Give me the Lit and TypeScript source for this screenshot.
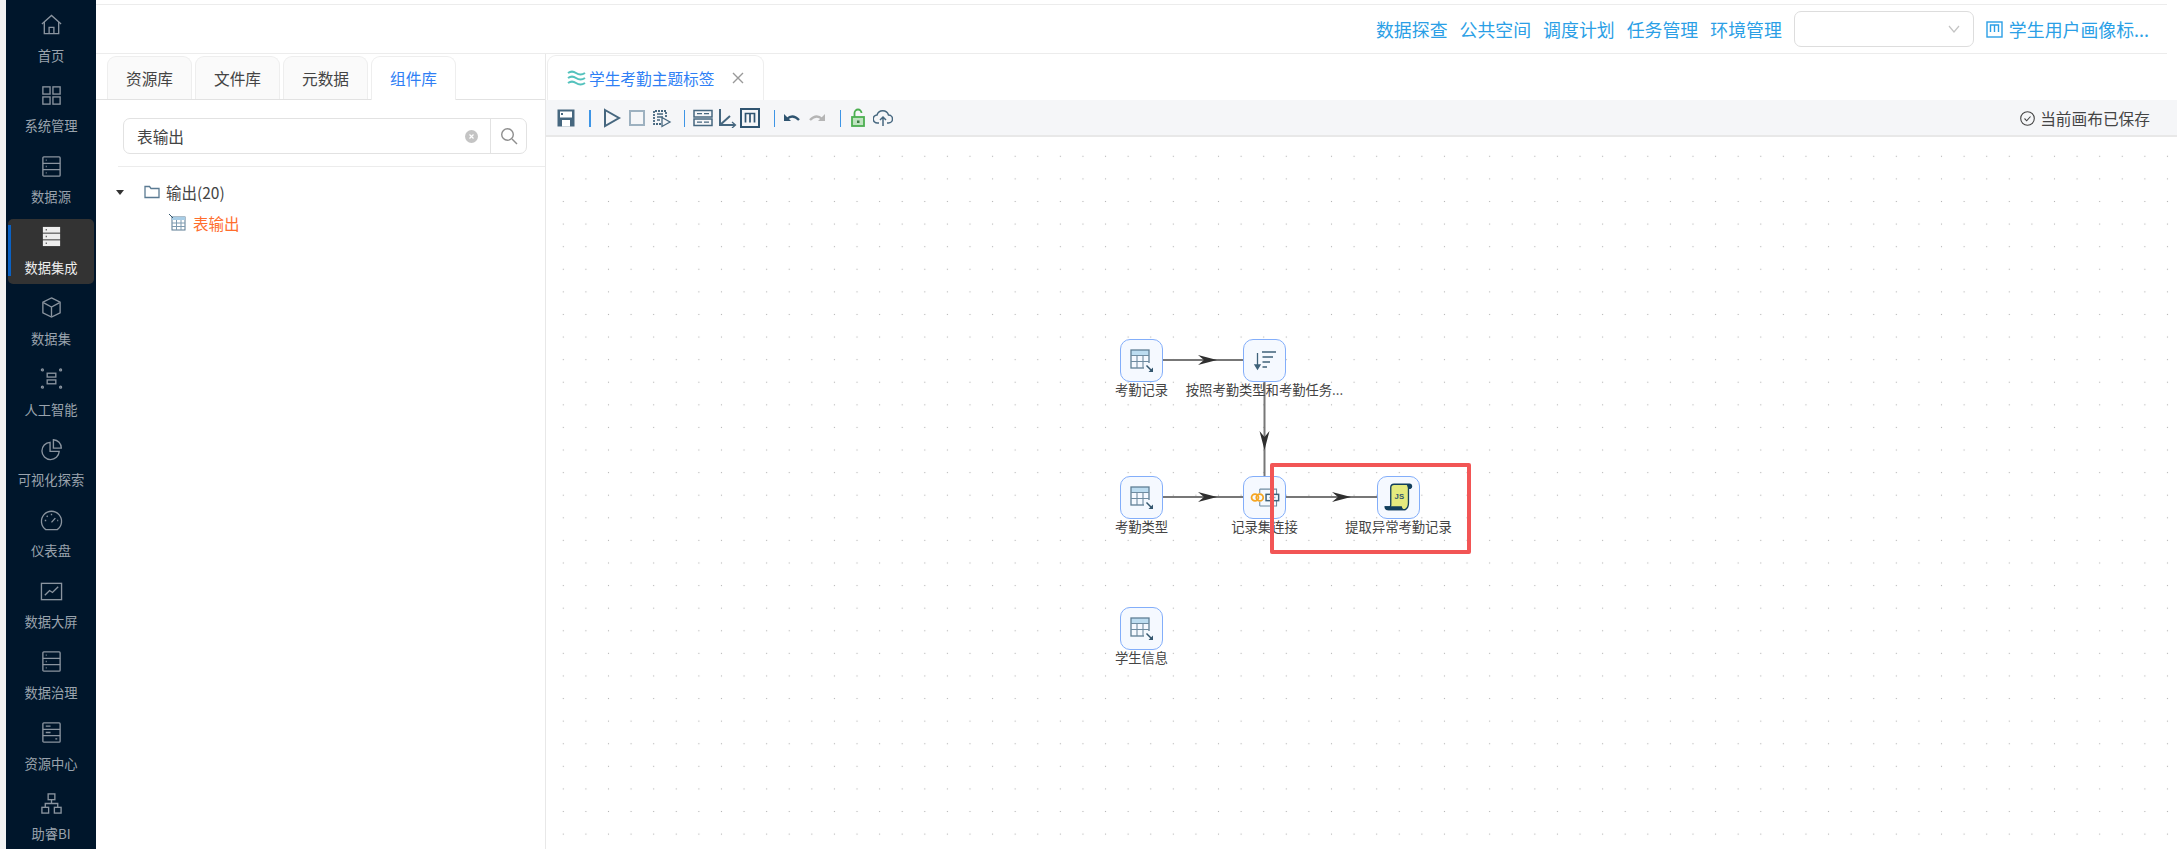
import {LitElement, css, html, svg} from 'lit';
import {customElement} from 'lit/decorators.js';

const serverRows = svg`
  <rect x="3" y="2" width="18" height="20" rx="1"/>
  <path d="M3 8.700h18M3 15.300h18"/>
  <path d="M6 5.400h1M6 12h1M6 18.600h1"/>`;

const navIcons: Record<string, unknown> = {
  home: svg`<path d="M2 11.500 12 2.500l10 9"/><path d="M4.500 9.500V21.500h15V9.500"/><path d="M9.500 21.500v-6.500h5v6.500"/>`,
  grid: svg`<rect x="3" y="3" width="7.500" height="7.500"/><rect x="13.500" y="3" width="7.500" height="7.500"/><rect x="3" y="13.500" width="7.500" height="7.500"/><rect x="13.500" y="13.500" width="7.500" height="7.500"/>`,
  server: serverRows,
  cube: svg`<path d="M12 2 21 6.500v11L12 22l-9-4.500v-11z"/><path d="M3.500 7 12 11.500 20.500 7M12 11.500V21.500"/>`,
  ai: svg`<rect x="7.500" y="6.500" width="9" height="4"/><rect x="7.500" y="13.500" width="9" height="4"/><circle cx="2.500" cy="3" r="1"/><circle cx="21.500" cy="3" r="1"/><circle cx="2.500" cy="21" r="1"/><circle cx="21.500" cy="21" r="1"/>`,
  pie: svg`<path d="M10.500 4.500a9 9 0 1 0 9.500 9.500h-9.500z"/><path d="M14 1.800a8.500 8.500 0 0 1 8.200 8.700H14z"/>`,
  gauge: svg`<path d="M6 21.500a10.500 10.500 0 1 1 12 0z"/><path d="M12 14l4-4.500M5 12h1.500M18 12h1M12 5v1.500M7 7l1 1"/>`,
  chart: svg`<rect x="1.500" y="3.500" width="21" height="17"/><path d="M5 16l5-5 3 2 6-6"/>`,
  server2: svg`<rect x="3" y="2" width="18" height="20" rx="1"/><path d="M3 8.700h18M3 15.300h18"/><path d="M6 5.400h5M6 12h5M16 18.600h2"/>`,
  org: svg`<rect x="8.500" y="2" width="7" height="6"/><rect x="2" y="16" width="7" height="6"/><rect x="15" y="16" width="7" height="6"/><path d="M12 8v4M5.500 16v-4h13v4"/>`,
};

const navItems = [
  {label: '首页', icon: 'home'},
  {label: '系统管理', icon: 'grid'},
  {label: '数据源', icon: 'server'},
  {label: '数据集成', icon: 'server', active: true},
  {label: '数据集', icon: 'cube'},
  {label: '人工智能', icon: 'ai'},
  {label: '可视化探索', icon: 'pie'},
  {label: '仪表盘', icon: 'gauge'},
  {label: '数据大屏', icon: 'chart'},
  {label: '数据治理', icon: 'server'},
  {label: '资源中心', icon: 'server2'},
  {label: '助睿BI', icon: 'org'},
];

const tableIcon = html`<svg viewBox="0 0 28 28" width="28" height="28" fill="none">
  <rect x="3" y="3" width="18" height="5" fill="#bcdcf0"/>
  <rect x="3" y="3" width="18" height="18" stroke="#5f7f95" stroke-width="1.300"/>
  <path d="M3 8.500h18M3 14.500h18M9 8.500v12.500M15 8.500v12.500" stroke="#6f8ca1" stroke-width="1.100"/>
  <rect x="16" y="16" width="11" height="11" fill="#f5f9ff"/>
  <path d="M18.500 18.500l5 5" stroke="#33566e" stroke-width="1.500"/>
  <path d="M25 20.500v4.500h-4.500z" fill="#33566e"/>
</svg>`;

const sortIcon = html`<svg viewBox="0 0 28 28" width="28" height="28" fill="none" stroke="#3f627a" stroke-width="1.300">
  <path d="M6.500 6v15"/><path d="M4 18l2.500 4 2.500-4z" fill="#3f627a"/>
  <path d="M11 5h14M11.500 10h10.500M11.500 15h7.500M11.500 20h4.500"/>
</svg>`;

const joinIcon = html`<svg viewBox="0 0 28 20" width="30" height="21" fill="none">
  <path d="M9 2h16v5M9 18h16v-5M9 2v4M9 14v4" stroke="#6f8ca1" stroke-width="1"/>
  <rect x="15" y="7" width="12" height="6" fill="#f5f9ff" stroke="#3f627a" stroke-width="1.400"/>
  <path d="M18 10h6" stroke="#8fb2c9" stroke-width="1.400"/>
  <circle cx="4.500" cy="10" r="3.300" stroke="#f5a623" stroke-width="1.700"/>
  <circle cx="9" cy="10" r="3.300" stroke="#f5a623" stroke-width="1.700"/>
</svg>`;

const jsIcon = html`<svg viewBox="0 0 28 28" width="31" height="31" fill="none">
  <path d="M7 5c0-2 1-3 3-3h14c2 0 2.500 3 .5 3.500L23 6v13c0 3-1 5-3 6H5c-2 0-3-1-3-2.500h3.500c1.500 0 1.500-1 1.500-2z" fill="#e4ea7e" stroke="#123f5c" stroke-width="1.200"/>
  <path d="M1.500 22h15.500c0 1.500 1 3 3.500 3.500H5c-2 0-3.500-1.500-3.500-3.500z" fill="#123f5c"/>
  <path d="M20.500 2c2 .5 1.500 4 2.500 4h2c1.500-1 .5-4-1-4z" fill="#123f5c"/>
  <text x="10.500" y="15" font-size="7" font-weight="700" font-family="Liberation Sans, sans-serif" fill="#33566e">JS</text>
</svg>`;

const nodes = [
  {x: 574, y: 202, label: '考勤记录', icon: tableIcon},
  {x: 697, y: 202, label: '按照考勤类型和考勤任务...', icon: sortIcon},
  {x: 574, y: 339, label: '考勤类型', icon: tableIcon},
  {x: 697, y: 339, label: '记录集连接', icon: joinIcon},
  {x: 831, y: 339, label: '提取异常考勤记录', icon: jsIcon},
  {x: 574, y: 470, label: '学生信息', icon: tableIcon},
];

const edges = [
  {x1: 617, y1: 223, x2: 697, y2: 223},
  {x1: 718.500, y1: 245, x2: 718.500, y2: 339},
  {x1: 617, y1: 360, x2: 697, y2: 360},
  {x1: 740, y1: 360, x2: 831, y2: 360},
];

// arrow tip sits about 55% along the edge, notched at the back
const arrowHead = (e: {x1: number; y1: number; x2: number; y2: number}) => {
  const tx = e.x1 === e.x2 ? e.x1 : e.x1 + 54 + (e.x2 - e.x1 > 85 ? 11 : 0);
  const ty = e.x1 === e.x2 ? e.y1 + 68 : e.y1;
  return e.x1 === e.x2
    ? svg`<path d=${`M${tx} ${ty}l-5 -19 5 6 5 -6z`} fill="#2f2f2f"/>`
    : svg`<path d=${`M${tx} ${ty}l-19 -5 6 5 -6 5z`} fill="#2f2f2f"/>`;
};

const tb = (content: unknown, cls = '', w = 20) =>
  html`<svg class="tb ${cls}" viewBox="0 0 ${w} 20" width=${w} height="20" fill="none" stroke="#46677f" stroke-width="1.800">${content}</svg>`;

@customElement('app-root')
export class AppRoot extends LitElement {
  static styles = css`
    :host {
      display: flex;
      width: 2177px;
      height: 849px;
      overflow: hidden;
      background: #fff;
      font-family: 'Noto Sans CJK SC', 'Noto Sans', sans-serif;
      color: #444;
    }
    .gutter {
      width: 6px;
      background: #f2f2f2;
      flex: none;
    }
    .side {
      width: 90px;
      flex: none;
      background: #00162b;
      padding-top: 7px;
      box-sizing: border-box;
      display: grid;
      grid-auto-rows: 70.820px;
      justify-items: center;
      overflow: hidden;
    }
    .nav-item {
      position: relative;
      width: 86px;
      height: 65px;
      border-radius: 5px;
      box-sizing: border-box;
      padding-top: 6px;
      display: flex;
      flex-direction: column;
      align-items: center;
      color: #9aa3ad;
      font-size: 13.300px;
      line-height: 20px;
      white-space: nowrap;
    }
    .nav-item svg {
      width: 23px;
      height: 23px;
      margin-bottom: 9.500px;
      fill: none;
      stroke: #8a949f;
      stroke-width: 1.400;
    }
    .nav-item.active {
      background: #333;
      color: #eee;
    }
    .nav-item.active svg {
      stroke: #333;
    }
    .nav-item.active::before {
      content: '';
      position: absolute;
      left: 0;
      top: 6px;
      bottom: 8px;
      width: 3px;
      background: #0b62c4;
    }
    .main {
      flex: 1;
      min-width: 0;
      display: flex;
      flex-direction: column;
    }
    .topbar {
      margin: 4px 10px 0 0;
      height: 50px;
      box-sizing: border-box;
      border-top: 1px solid #ececec;
      border-bottom: 1px solid #ececec;
      display: flex;
      align-items: center;
      justify-content: flex-end;
      gap: 12px;
      padding: 16px 18px 16px 0;
      color: #2b9fe6;
      font-size: 17.900px;
      white-space: nowrap;
    }
    .select {
      width: 180px;
      height: 36px;
      box-sizing: border-box;
      border: 1px solid #ddd;
      border-radius: 7px;
      display: flex;
      align-items: center;
      justify-content: flex-end;
      padding-right: 12px;
      margin: 4px 0;
    }
    .current {
      display: flex;
      align-items: center;
      gap: 6px;
    }
    .body {
      flex: 1;
      min-height: 0;
      display: flex;
    }
    .left {
      width: 450px;
      flex: none;
      box-sizing: border-box;
      border-right: 1px solid #e8e8e8;
      padding-top: 2px;
    }
    .tabs {
      display: flex;
      gap: 3px;
      height: 44px;
      padding-left: 11px;
      border-bottom: 1px solid #e2e2e2;
      box-sizing: border-box;
    }
    .tab {
      width: 85px;
      box-sizing: border-box;
      border: 1px solid #eee;
      border-bottom: none;
      border-radius: 9px 9px 0 0;
      background: #fafafa;
      font-size: 15.700px;
      display: flex;
      align-items: center;
      justify-content: center;
    }
    .tab.on {
      background: #fff;
      color: #2f7ff5;
      position: relative;
      height: 44px;
    }
    .search-wrap {
      margin: 18px 0 0 22px;
      padding: 0 0 12px 0;
      border-bottom: 1px solid #ececec;
    }
    .search {
      width: 404px;
      height: 36px;
      margin-left: 5px;
      box-sizing: border-box;
      border: 1.500px solid #e2e2e2;
      border-radius: 7px;
      display: flex;
      align-items: center;
      font-size: 15.700px;
    }
    .search .val {
      flex: 1;
      padding-left: 13px;
    }
    .clear {
      width: 13px;
      height: 13px;
      margin-right: 12px;
    }
    .search .btn {
      width: 35px;
      height: 100%;
      border-left: 1px solid #e2e2e2;
      display: flex;
      align-items: center;
      justify-content: center;
    }
    .tree {
      padding: 9px 0 0 20px;
      font-size: 15.500px;
    }
    .row {
      display: flex;
      align-items: center;
      height: 31px;
    }
    .caret {
      width: 0;
      height: 0;
      border: 4px solid transparent;
      border-top: 5px solid #333;
      margin: 5px 20px 0 0;
    }
    .row .folder {
      margin-right: 6px;
    }
    .row.sub {
      padding-left: 53px;
      color: #ff6d2c;
      gap: 7px;
    }
    .right {
      flex: 1;
      min-width: 0;
      display: flex;
      flex-direction: column;
    }
    .doc-tabs {
      height: 46px;
      padding-left: 1px;
      box-sizing: border-box;
      flex: none;
      display: flex;
    }
    .doc-tab {
      width: 217px;
      box-sizing: border-box;
      margin-top: 1px;
      border: 1px solid #eee;
      border-bottom: none;
      border-radius: 9px 9px 0 0;
      display: flex;
      align-items: center;
      padding-left: 19px;
      gap: 2px;
      color: #2f7ff5;
      font-size: 15.700px;
      white-space: nowrap;
    }
    .doc-tab .x {
      margin-left: 15px;
    }
    .toolbar {
      height: 37px;
      flex: none;
      background: #f5f6f8;
      border-bottom: 2px solid #e8e8e8;
      box-sizing: border-box;
      display: flex;
      align-items: center;
      padding: 1px 27px 0 10px;
      font-size: 15.700px;
      white-space: nowrap;
    }
    .tb {
      flex: none;
      display: block;
    }
    .tb.mid {
      margin-left: 5px;
    }
    .tb.near {
      margin-left: 3.500px;
    }
    .tb.far {
      margin-left: 7.500px;
    }
    .sep {
      width: 1.500px;
      height: 17px;
      background: #3d95e6;
      flex: none;
    }
    .sep.a {
      margin: 0 11.700px 0 13.200px;
    }
    .sep.b {
      margin: 0 8px 0 11.200px;
    }
    .sep.c {
      margin: 0 7.200px 0 13.700px;
    }
    .sep.d {
      margin: 0 8.700px 0 12.200px;
    }
    .saved {
      margin-left: auto;
      display: flex;
      align-items: center;
      gap: 5px;
    }
    .canvas {
      flex: 1;
      min-height: 0;
      position: relative;
      overflow: hidden;
      background-image: radial-gradient(circle, #b4b4b4 0.7px, transparent 1px);
      background-size: 22.600px 22.600px;
      background-position: 6px 8px;
    }
    .edges {
      position: absolute;
      inset: 0;
      width: 100%;
      height: 100%;
    }
    .node {
      position: absolute;
      width: 43px;
      height: 43px;
      box-sizing: border-box;
      border: 1.500px solid #83aefa;
      border-radius: 10px;
      background: #f5f9ff;
      display: flex;
      align-items: center;
      justify-content: center;
    }
    .label {
      position: absolute;
      top: 100%;
      left: 50%;
      transform: translateX(-50%);
      margin-top: -1px;
      font-size: 13.300px;
      line-height: 20px;
      color: #444;
      white-space: nowrap;
    }
    .mark {
      position: absolute;
      left: 724px;
      top: 326px;
      width: 201px;
      height: 91px;
      box-sizing: border-box;
      border: 4px solid #f25555;
      border-radius: 2px;
    }
    .active-icon {
      fill: none;
    }
    .active-icon rect {
      fill: #eee;
      stroke: none;
    }
  `;

  render() {
    return html`
      <div class="gutter"></div>
      <nav class="side">
        ${navItems.map(
          (n) => html`<div class="nav-item ${n.active ? 'active' : ''}">
            ${n.active
              ? html`<svg class="active-icon" viewBox="0 0 24 24">
                  <rect x="3" y="2" width="18" height="6" />
                  <rect x="3" y="9" width="18" height="6" />
                  <rect x="3" y="16" width="18" height="6" />
                  <path d="M6 5h1M6 12h1M6 19h1" />
                </svg>`
              : html`<svg viewBox="0 0 24 24">${navIcons[n.icon]}</svg>`}
            <span>${n.label}</span>
          </div>`
        )}
      </nav>
      <div class="main">
        <header class="topbar">
          <span>数据探查</span><span>公共空间</span><span>调度计划</span><span>任务管理</span><span>环境管理</span>
          <div class="select">
            <svg width="14" height="14" viewBox="0 0 14 14" fill="none" stroke="#c4c4c4" stroke-width="1.200"><path d="M2 4l5 6 5-6" /></svg>
          </div>
          <div class="current">
            <svg width="17" height="17" viewBox="0 0 17 17" fill="none" stroke="#2b9fe6" stroke-width="1.400"><rect x="1" y="1" width="15" height="15" /><path d="M4.500 11V4h8v7M8.500 4v7" /></svg>
            <span>学生用户画像标...</span>
          </div>
        </header>
        <div class="body">
          <aside class="left">
            <div class="tabs">
              <div class="tab">资源库</div>
              <div class="tab">文件库</div>
              <div class="tab">元数据</div>
              <div class="tab on">组件库</div>
            </div>
            <div class="search-wrap">
              <div class="search">
                <span class="val">表输出</span>
                <svg class="clear" viewBox="0 0 13 13"><circle cx="6.500" cy="6.500" r="6.500" fill="#c4c4c4" /><path d="M4.500 4.500l4 4M8.500 4.500l-4 4" stroke="#fff" stroke-width="1.200" /></svg>
                <div class="btn">
                  <svg width="18" height="18" viewBox="0 0 18 18" fill="none" stroke="#8e8e8e" stroke-width="1.400"><circle cx="7.500" cy="7.500" r="5.800" /><path d="M12 12l5 5" /></svg>
                </div>
              </div>
            </div>
            <div class="tree">
              <div class="row">
                <span class="caret"></span>
                <svg class="folder" width="16" height="14" viewBox="0 0 16 14" fill="none" stroke="#5a7a92" stroke-width="1.300"><path d="M1 2.500V12.500H15V3.500H7L5.500 1.500H1z" /></svg>
                <span>输出(20)</span>
              </div>
              <div class="row sub">
                <svg width="17" height="18" viewBox="0 0 17 18" fill="none">
                  <rect x="3" y="3" width="13" height="13" fill="#fff" stroke="#5a7a92" />
                  <rect x="3" y="3" width="13" height="3" fill="#a8cde6" />
                  <path d="M3 9h13M3 12.500h13M7.500 6v10M12 6v10" stroke="#7f9bb0" />
                  <rect x="0" y="0" width="3" height="3" fill="#fff" />
                  <path d="M0 0l4 4" stroke="#33566e" />
                </svg>
                <span>表输出</span>
              </div>
            </div>
          </aside>
          <section class="right">
            <div class="doc-tabs">
              <div class="doc-tab">
                <svg width="20" height="16" viewBox="0 0 20 16" fill="none" stroke="#54c2bd" stroke-width="2.100"><path d="M1 3c3-2 5-2 8 0s6 2 9 0M1 8c3-2 5-2 8 0s6 2 9 0M1 13c3-2 5-2 8 0s6 2 9 0" /></svg>
                <span>学生考勤主题标签</span>
                <svg class="x" width="12" height="12" viewBox="0 0 12 12" stroke="#999" stroke-width="1.400"><path d="M1 1l10 10M11 1L1 11" /></svg>
              </div>
            </div>
            <div class="toolbar">
              ${tb(svg`<path d="M1.500 1.500h17v17h-17z" fill="#46677f" stroke="none"/><rect x="4" y="3.500" width="12" height="6" fill="#fff" stroke="none"/><rect x="6" y="12" width="8" height="6.500" fill="#fff" stroke="none"/><rect x="5" y="5" width="2" height="2" fill="#46677f" stroke="none"/>`)}
              <span class="sep a"></span>
              ${tb(svg`<path d="M3 2l14 8-14 8z" stroke-width="2"/>`)}
              ${tb(svg`<rect x="3" y="3" width="14" height="14" stroke="#9db1c0" stroke-width="2"/>`, 'mid')}
              ${tb(svg`<path d="M14 9V3H2v13h7" stroke-dasharray="2 1"/><path d="M5 6h6M5 9h6M5 12h3" stroke-width="1.400"/><path d="M10 9.500l8 4.500-8 4.500z" stroke-width="1.300"/>`, 'mid')}
              <span class="sep b"></span>
              ${tb(svg`<rect x="1" y="2.500" width="18" height="6.500" stroke-width="1.500"/><rect x="1" y="11" width="18" height="6.500" stroke-width="1.500"/><path d="M4 5.700h5M11 5.700h5M4 14.200h5M11 14.200h5" stroke-width="1.200"/>`)}
              ${tb(svg`<path d="M3 1v16h15" stroke-width="2"/><path d="M3 17L13 8" stroke-width="2"/><path d="M15 14l3.500 3-3.500 3" stroke-width="1.300"/>`, 'near')}
              ${tb(svg`<rect x="1" y="1" width="18" height="18" stroke="#2f5470" stroke-width="2"/><path d="M5.500 14.500V5.500h9v9M10 5.500v9" stroke="#2f5470" stroke-width="1.700"/>`, 'near')}
              <span class="sep c"></span>
              ${tb(svg`<path d="M2 6v7h7z" fill="#2f5470" stroke="none"/><path d="M5 11c4-4 8-3 12 1" stroke="#2f5470" stroke-width="2.400"/>`)}
              ${tb(svg`<path d="M18 6v7h-7z" fill="#b5b5b5" stroke="none"/><path d="M15 11c-4-4-8-3-12 1" stroke="#b5b5b5" stroke-width="2.400"/>`, 'mid')}
              <span class="sep d"></span>
              ${tb(svg`<rect x="2" y="9" width="12" height="9" fill="#bfe3c0" stroke="#4caf50"/><path d="M4.500 9V5a3.500 3.500 0 0 1 7 0" stroke="#4caf50"/><rect x="7" y="12.500" width="2.500" height="2.500" fill="#3d7a42" stroke="none"/>`, '', 16)}
              ${tb(svg`<path d="M6 15H4.500a4 4 0 0 1-.5-8 6 6 0 0 1 11.500 0 4 4 0 0 1 0 8H14" stroke-width="1.500"/><path d="M10 18v-9M7 12l3-3 3 3" stroke-width="1.500"/>`, 'far')}
              <div class="saved">
                <svg width="15" height="15" viewBox="0 0 15 15" fill="none" stroke="#444" stroke-width="1.100"><circle cx="7.500" cy="7.500" r="6.800" /><path d="M4.500 7.500l2.200 2.300 3.800-4.300" /></svg>
                <span>当前画布已保存</span>
              </div>
            </div>
            <div class="canvas">
              <svg class="edges">
                ${edges.map(
                  (e) => svg`<line x1=${e.x1} y1=${e.y1} x2=${e.x2} y2=${e.y2} stroke="#777" stroke-width="2"/>${arrowHead(e)}`
                )}
              </svg>
              ${nodes.map(
                (n) => html`<div class="node" style="left:${n.x}px;top:${n.y}px">
                  ${n.icon}<span class="label">${n.label}</span>
                </div>`
              )}
              <div class="mark"></div>
            </div>
          </section>
        </div>
      </div>
    `;
  }
}
